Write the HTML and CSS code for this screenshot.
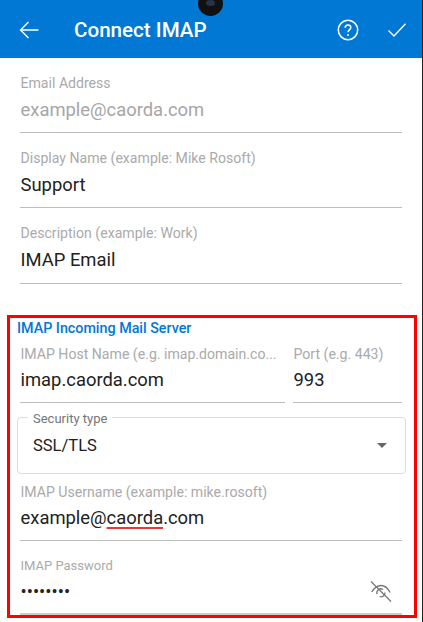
FILE: index.html
```html
<!DOCTYPE html>
<html lang="en">
    <head>
        <meta charset="UTF-8" />
        <title>Connect IMAP</title>
        <link rel="stylesheet" href="styles.css">
    </head>
    <body>
        <div class="screen">
            <div class="camera"><span class="lens"></span></div>
            <header class="topbar">
                <svg class="icon-back" width="20" height="18" viewBox="0 0 20 18"><path d="M19.500 9H1.500M9.500 1 1.500 9l8 8" fill="none" stroke="#fff" stroke-width="1.400"/></svg>
                <h1>Connect IMAP</h1>
                <svg class="icon-help" width="22" height="22" viewBox="0 0 22 22"><circle cx="11" cy="11" r="9.700" fill="none" stroke="#fff" stroke-width="1.500"/><path d="M8.200 8.800c0-1.700 1.200-2.800 2.800-2.800s2.800 1.100 2.800 2.600c0 2.200-2.800 2.300-2.800 4.600" fill="none" stroke="#fff" stroke-width="1.500"/><circle cx="11" cy="16" r="1" fill="#fff"/></svg>
                <svg class="icon-check" width="18" height="14" viewBox="0 0 18 14"><path d="M0.500 7.500l5.500 5.500L17.500 0.800" fill="none" stroke="#fff" stroke-width="1.300"/></svg>
            </header>
            <div class="form">
                <div class="field">
                    <label>Email Address</label>
                    <div class="value muted">example@caorda.com</div>
                </div>
                <div class="field">
                    <label>Display Name (example: Mike Rosoft)</label>
                    <div class="value">Support</div>
                </div>
                <div class="field tall">
                    <label>Description (example: Work)</label>
                    <div class="value">IMAP Email</div>
                </div>
                <section class="server">
                    <h2>IMAP Incoming Mail Server</h2>
                    <div class="row">
                        <div class="field host">
                            <label>IMAP Host Name (e.g. imap.domain.co...</label>
                            <div class="value">imap.caorda.com</div>
                        </div>
                        <div class="field port">
                            <label>Port (e.g. 443)</label>
                            <div class="value">993</div>
                        </div>
                    </div>
                    <div class="select">
                        <span class="select-label">Security type</span>
                        <span class="select-value">SSL/TLS</span>
                        <span class="caret"></span>
                    </div>
                    <div class="field username">
                        <label>IMAP Username (example: mike.rosoft)</label>
                        <div class="value">example@<span class="typo">caorda</span>.com</div>
                    </div>
                    <div class="field password">
                        <label>IMAP Password</label>
                        <div class="value dots">
                            <span>••••••••</span>
                            <svg width="22" height="22" viewBox="0 0 22 22"><path d="M1.800 11C4.500 6.500 7.500 4.500 11 4.500s6.500 2 9 7M7 13a4 4 0 0 1 6-4.500M15 11.500a4 4 0 0 1-5.500 4" fill="none" stroke="#777" stroke-width="1.300"/><path d="M1 0.500l20 20" stroke="#777" stroke-width="1.300"/></svg>
                        </div>
                    </div>
                </section>
            </div>
        </div>
    </body>
</html>
```

FILE: styles.css
```css
html,
body {
    margin: 0;
    padding: 0;
    background: #fff;
}
.screen {
    width: 423px;
    height: 622px;
    box-sizing: border-box;
    border-right: 1px solid #222;
    overflow: hidden;
    position: relative;
    font-family: Roboto, "Liberation Sans", sans-serif;
    color: #212121;
}
.camera {
    position: absolute;
    top: -9px;
    left: 198px;
    width: 25px;
    height: 25px;
    border-radius: 50%;
    background: #111;
}
.lens {
    position: absolute;
    left: 8px;
    top: 9px;
    width: 9px;
    height: 6px;
    border-radius: 50%;
    background: #26344a;
}
.topbar {
    height: 58px;
    background: #0078d4;
    display: flex;
    align-items: center;
    padding: 2px 16px 0 19px;
    box-sizing: border-box;
    color: #fff;
}
.topbar h1 {
    margin: 0 0 0 35px;
    font-size: 20.6px;
    font-weight: 500;
    flex: 1;
}
.icon-check {
    margin-left: 29px;
}
.form {
    padding: 17px 20px 0;
}
.field {
    border-bottom: 1px solid #bdbdbd;
    margin-bottom: 17px;
    height: 57px;
}
.field.tall {
    height: 58px;
}
.field label {
    display: block;
    padding-left: 0.5px;
    font-size: 14.1px;
    line-height: 16px;
    color: #aaa;
    white-space: nowrap;
}
.value {
    padding-left: 0.5px;
    font-size: 18.4px;
    line-height: 22px;
    margin-top: 8px;
}
.muted {
    color: #a6a6a6;
}
.server {
    margin: 31px 0 0 -13px;
    width: 410px;
    height: 303px;
    box-sizing: border-box;
    border: 3px solid #f00;
    padding: 2px 0 0 10px;
}
.server h2 {
    margin: 0 0 0 -3px;
    font-size: 14.3px;
    line-height: 16px;
    font-weight: 500;
    color: #0078d4;
}
.row {
    display: flex;
    gap: 8px;
    margin-top: 10px;
}
.host {
    width: 265px;
}
.port {
    width: 109px;
}
.row .field {
    height: 56px;
    margin-bottom: 0;
}
.row .value {
    margin-top: 7px;
}
.select {
    position: relative;
    margin: 14px 0 0 -3px;
    width: 389px;
    height: 57px;
    box-sizing: border-box;
    border: 1px solid #ddd;
    border-radius: 4px;
    display: flex;
    align-items: center;
    padding: 0 18px 0 15px;
}
.select-label {
    position: absolute;
    top: -7px;
    left: 10px;
    padding: 0 5px;
    background: #fff;
    font-size: 13px;
    line-height: 16px;
    color: #757575;
}
.select-value {
    font-size: 16.5px;
    flex: 1;
}
.caret {
    width: 0;
    height: 0;
    border: 5px solid transparent;
    border-top: 5px solid #666;
    border-bottom: 0;
}
.username {
    width: 382px;
    margin: 10px 0 0;
    height: 56px;
}
.username .value {
    margin-top: 7px;
}
.password {
    width: 382px;
    margin: 17px 0 0;
    border-bottom: 2px solid #ccc;
    height: 55px;
}
.password label {
    font-size: 13px;
}
.dots {
    display: flex;
    justify-content: space-between;
    align-items: center;
    padding-right: 10px;
    margin-top: 7px;
}
.typo {
    text-decoration: underline;
    text-decoration-color: #e53935;
    text-decoration-thickness: 1.5px;
    text-decoration-skip-ink: none;
    text-underline-offset: 3px;
}
```
